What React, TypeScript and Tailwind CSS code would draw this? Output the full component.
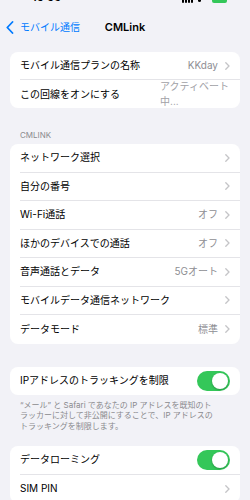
import React from 'react';

type Row = {
  label: string;
  value?: string;
  chevron?: boolean;
  toggle?: boolean;
};

const Chevron: React.FC = () => (
  <svg width="5" height="8" viewBox="0 0 5 8" className="ml-[7px] shrink-0">
    <path d="M0.8 0.8 L4 4 L0.8 7.2" fill="none" stroke="#c4c4c7" strokeWidth="1.3" strokeLinecap="round" strokeLinejoin="round" />
  </svg>
);

const Toggle: React.FC = () => (
  <div className="w-[33px] h-[20px] rounded-full bg-[#34c759] flex items-center justify-end pr-[2px] shrink-0">
    <div className="w-[16px] h-[16px] rounded-full bg-white shadow-[0_1px_2px_rgba(0,0,0,0.25)]" />
  </div>
);

const Card: React.FC<{ rows: Row[]; rowH?: string }> = ({ rows, rowH = 'h-[28.5px]' }) => (
  <div className="mx-[10px] bg-white rounded-[8px] overflow-hidden">
    {rows.map((r, i) => (
      <div key={r.label} className="pl-[10px]">
        <div
          className={`flex items-center ${rowH} pr-[10px] ${i < rows.length - 1 ? 'border-b border-[#e4e4e8]' : ''}`}
        >
          <span className="flex-1 text-[10px] text-black whitespace-nowrap">{r.label}</span>
          {r.value && <span className="text-[10px] text-[#8e8e93] whitespace-nowrap">{r.value}</span>}
          {r.chevron && <Chevron />}
          {r.toggle && <Toggle />}
        </div>
      </div>
    ))}
  </div>
);

const App: React.FC = () => {
  return (
    <div
      className="min-h-screen bg-[#f2f2f7] overflow-hidden"
      style={{ fontFamily: 'Inter, "Noto Sans CJK JP", sans-serif' }}
    >
      {/* status bar, mostly scrolled out of view */}
      <div className="h-[3px] overflow-hidden">
        <div className="flex items-end justify-between h-[12px] -mt-[9px] pl-[32px] pr-[23px]">
          <span className="text-[11px] leading-[12px] font-semibold text-black">15:56</span>
          <div className="flex items-end gap-[5px] h-[12px]">
            <div className="flex items-end gap-[1px]">
              <div className="w-[2px] h-[4px] bg-black rounded-[1px]" />
              <div className="w-[2px] h-[6px] bg-black rounded-[1px]" />
              <div className="w-[2px] h-[8px] bg-black rounded-[1px]" />
              <div className="w-[2px] h-[10px] bg-black rounded-[1px]" />
            </div>
            <div className="w-[3px] h-[3px] bg-black rounded-full mb-[1px]" />
            <div className="w-[15px] h-[7px] bg-[#34c759] rounded-[2px] ml-[6px]" />
          </div>
        </div>
      </div>

      {/* nav bar */}
      <div className="grid grid-cols-[1fr_auto_1fr] items-center h-[48px]">
        <div className="flex items-center pl-[6px] text-[#007aff]">
          <svg width="8" height="13" viewBox="0 0 8 13" className="mr-[6px]">
            <path d="M6.5 1 L1.3 6.5 L6.5 12" fill="none" stroke="#007aff" strokeWidth="1.8" strokeLinecap="round" strokeLinejoin="round" />
          </svg>
          <span className="text-[10px] whitespace-nowrap">モバイル通信</span>
        </div>
        <div className="text-[11px] font-semibold text-black">CMLink</div>
        <div />
      </div>

      <div className="mt-[1px] mx-[10px] bg-white rounded-[8px] overflow-hidden">
        <div className="pl-[10px]">
          <div className="flex items-center h-[28px] pr-[10px] border-b border-[#e4e4e8]">
            <span className="flex-1 text-[10px] text-black whitespace-nowrap">モバイル通信プランの名称</span>
            <span className="text-[10px] text-[#8e8e93]">KKday</span>
            <Chevron />
          </div>
        </div>
        <div className="pl-[10px]">
          <div className="flex items-center h-[28px] pr-[10px]">
            <span className="flex-1 text-[10px] text-black whitespace-nowrap">この回線をオンにする</span>
            <span className="w-[70px] shrink-0 whitespace-nowrap text-[10px] leading-[15px] text-[#a1a1a6]">
              アクティベート
              <br />
              中...
            </span>
          </div>
        </div>
      </div>

      <div className="mt-[22px] mb-[4px] pl-[20px] text-[8px] leading-[10px] text-[#8a8a8e]">CMLINK</div>

      <Card
        rows={[
          { label: 'ネットワーク選択', chevron: true },
          { label: '自分の番号', chevron: true },
          { label: 'Wi-Fi通話', value: 'オフ', chevron: true },
          { label: 'ほかのデバイスでの通話', value: 'オフ', chevron: true },
          { label: '音声通話とデータ', value: '5Gオート', chevron: true },
          { label: 'モバイルデータ通信ネットワーク', chevron: true },
          { label: 'データモード', value: '標準', chevron: true },
        ]}
      />

      <div className="mt-[23px]">
        <Card rowH="h-[28px]" rows={[{ label: 'IPアドレスのトラッキングを制限', toggle: true }]} />
      </div>

      <p className="mt-[5px] px-[20px] text-[8px] leading-[10.5px] text-[#8a8a8e]">
        “メール” と Safari であなたの IP アドレスを既知のト
        <br />
        ラッカーに対して非公開にすることで、IP アドレスの
        <br />
        トラッキングを制限します。
      </p>

      <div className="mt-[15px]">
        <Card
          rowH="h-[28.5px]"
          rows={[
            { label: 'データローミング', toggle: true },
            { label: 'SIM PIN', chevron: true },
          ]}
        />
      </div>
    </div>
  );
};

export default App;
